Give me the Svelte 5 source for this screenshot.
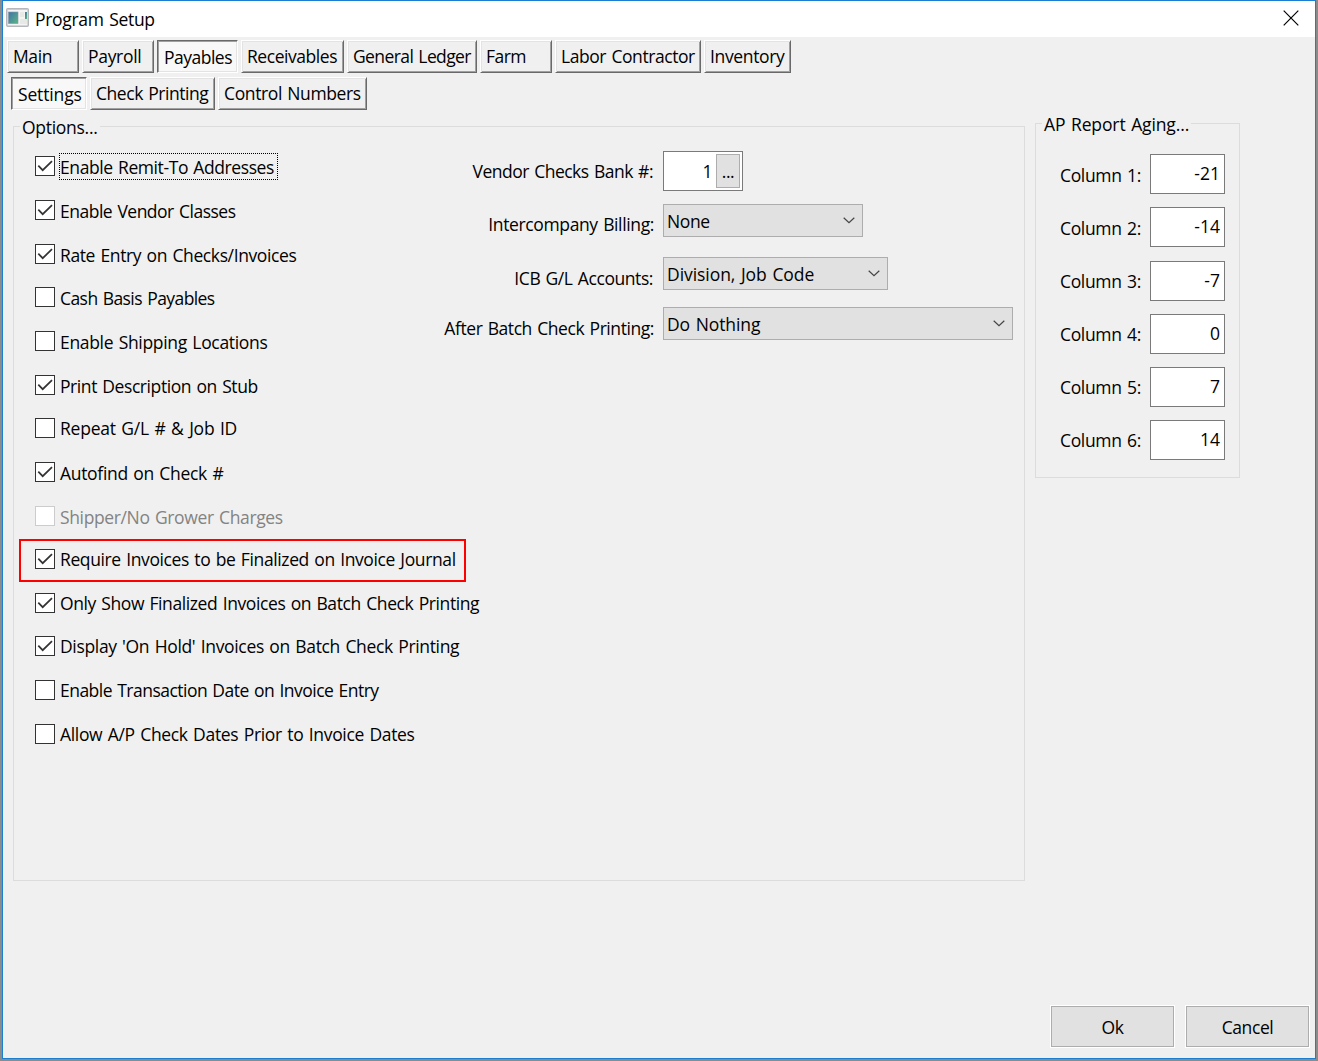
<script lang="ts">
    let activeTab = $state("Payables");
    let activeSubTab = $state("Settings");

    const tabs = [
        { name: "Main", width: 72, spacing: -0.4 },
        { name: "Payroll", width: 72, spacing: -0.3 },
        { name: "Payables", width: 81, spacing: -0.5 },
        { name: "Receivables", width: 103, spacing: -0.45 },
        { name: "General Ledger", width: 130, spacing: -0.6 },
        { name: "Farm", width: 72, spacing: -0.55 },
        { name: "Labor Contractor", width: 146, spacing: -0.43 },
        { name: "Inventory", width: 87, spacing: -0.35 },
    ];

    const subTabs = [
        { name: "Settings", width: 76, spacing: -0.15 },
        { name: "Check Printing", width: 125, spacing: -0.45 },
        { name: "Control Numbers", width: 149, spacing: -0.38 },
    ];

    let options = $state([
        { label: "Enable Remit-To Addresses", checked: true, spacing: -0.41, focused: true },
        { label: "Enable Vendor Classes", checked: true, spacing: -0.5 },
        { label: "Rate Entry on Checks/Invoices", checked: true, spacing: -0.38 },
        { label: "Cash Basis Payables", checked: false, spacing: -0.57 },
        { label: "Enable Shipping Locations", checked: false, spacing: -0.32 },
        { label: "Print Description on Stub", checked: true, spacing: -0.42 },
        { label: "Repeat G/L # & Job ID", checked: false, spacing: -0.22 },
        { label: "Autofind on Check #", checked: true, spacing: -0.31 },
        { label: "Shipper/No Grower Charges", checked: false, spacing: -0.37, disabled: true },
        { label: "Require Invoices to be Finalized on Invoice Journal", checked: true, spacing: -0.38, marked: true },
        { label: "Only Show Finalized Invoices on Batch Check Printing", checked: true, spacing: -0.4 },
        { label: "Display 'On Hold' Invoices on Batch Check Printing", checked: true, spacing: -0.34 },
        { label: "Enable Transaction Date on Invoice Entry", checked: false, spacing: -0.52 },
        { label: "Allow A/P Check Dates Prior to Invoice Dates", checked: false, spacing: -0.33 },
    ]);

    const selects = [
        { label: "Intercompany Billing:", value: "None", width: 200, spacing: -0.4 },
        { label: "ICB G/L Accounts:", value: "Division, Job Code", width: 225, spacing: -0.06 },
        { label: "After Batch Check Printing:", value: "Do Nothing", width: 350, spacing: -0.1 },
    ];

    const aging = ["-21", "-14", "-7", "0", "7", "14"];
</script>

<div class="desktop">
    <div class="window">
        <header class="titlebar">
            <svg class="app-icon" width="23" height="19" viewBox="0 0 23 19">
                <defs>
                    <linearGradient id="pane" x1="0" y1="0" x2="1" y2="1">
                        <stop offset="0" stop-color="#3f74a8" />
                        <stop offset="1" stop-color="#5cb585" />
                    </linearGradient>
                </defs>
                <rect x="0.75" y="0.75" width="21.5" height="17.5" rx="1" fill="#f4f4f4" stroke="#b4b8bd" stroke-width="1.5" />
                <path d="M1 1.5h21" stroke="#c9ced4" />
                <rect x="2.5" y="4" width="9.5" height="11.5" fill="url(#pane)" stroke="#8495a5" stroke-width="0.6" />
                <rect x="14" y="4" width="4" height="5" fill="#e6e9e4" />
                <rect x="14" y="11" width="7" height="5" fill="#e6e9e4" />
                <rect x="19" y="4" width="2" height="7" fill="url(#pane)" />
            </svg>
            <h1>Program Setup</h1>
            <button class="close" aria-label="Close">
                <svg width="16" height="16" viewBox="0 0 16 16">
                    <path d="M0.7 0.7l14.6 14.6M15.3 0.7L0.7 15.3" stroke="black" stroke-width="1.2" />
                </svg>
            </button>
        </header>

        <nav class="tabs">
            {#each tabs as tab (tab.name)}
                <button class="tab" class:active={tab.name === activeTab} style="width: {tab.width}px; letter-spacing: {tab.spacing}px" onclick={() => (activeTab = tab.name)}>{tab.name}</button>
            {/each}
        </nav>
        <nav class="tabs sub">
            {#each subTabs as tab (tab.name)}
                <button class="tab" class:active={tab.name === activeSubTab} style="width: {tab.width}px; letter-spacing: {tab.spacing}px" onclick={() => (activeSubTab = tab.name)}>{tab.name}</button>
            {/each}
        </nav>

        <main>
            <section class="group options">
                <h2>Options...</h2>
                <div class="checks">
                    {#each options as option (option.label)}
                        <label class="check" class:disabled={option.disabled} class:marked={option.marked}>
                            <input type="checkbox" bind:checked={option.checked} disabled={option.disabled} />
                            <span class="box">
                                {#if option.checked}
                                    <svg width="18" height="18" viewBox="0 0 18 18">
                                        <path d="M2.3 8.6l4.4 4.6L16 4.2" fill="none" stroke="#333" stroke-width="1.7" />
                                    </svg>
                                {/if}
                            </span>
                            <span class="text" class:focused={option.focused} style="letter-spacing: {option.spacing}px">{option.label}</span>
                        </label>
                    {/each}
                </div>
                <div class="fields">
                    <div class="field">
                        <span class="name">Vendor Checks Bank #:</span>
                        <div class="lookup">
                            <span>1</span>
                            <button>...</button>
                        </div>
                    </div>
                    {#each selects as select (select.label)}
                        <div class="field">
                            <span class="name">{select.label}</span>
                            <button class="select" style="width: {select.width}px; letter-spacing: {select.spacing}px">
                                {select.value}
                                <svg width="12" height="7" viewBox="0 0 12 7">
                                    <path d="M0.7 0.8L6 5.7l5.3-4.9" fill="none" stroke="#444" stroke-width="1.2" />
                                </svg>
                            </button>
                        </div>
                    {/each}
                </div>
            </section>

            <section class="group aging">
                <h2>AP Report Aging...</h2>
                <div class="columns">
                    {#each aging as days, i}
                        <div class="column">
                            <span>Column {i + 1}:</span>
                            <div class="number">{days}</div>
                        </div>
                    {/each}
                </div>
            </section>
        </main>

        <footer>
            <button class="action">Ok</button>
            <button class="action">Cancel</button>
        </footer>
    </div>
</div>

<style>
    :global(body) {
        margin: 0;
        overflow: hidden;
    }

    .desktop {
        box-sizing: border-box;
        width: 1318px;
        height: 1061px;
        padding: 0 2px 2px 2px;
        background-color: #8b8b8b;
    }

    .desktop *, .marked::before {
        box-sizing: border-box;
    }

    .window {
        display: flex;
        flex-direction: column;
        height: 1059px;
        border: 1px solid #1a7fd0;
        background-color: #f0f0f0;
        color: black;
        font-family: "Open Sans", "Noto Sans", sans-serif;
        font-size: 17.5px;
        line-height: 24px;
        letter-spacing: -0.4px;
        word-spacing: 1.2px;
        white-space: nowrap;
    }

    button {
        padding: 0;
        border: none;
        color: inherit;
        font: inherit;
        letter-spacing: inherit;
        word-spacing: inherit;
    }

    h1, h2 {
        margin: 0;
        font-size: inherit;
        font-weight: normal;
    }

    .titlebar {
        display: flex;
        height: 36px;
        padding: 7px 16px 0 3px;
        background-color: white;
    }

    .titlebar h1 {
        margin: -1px 0 0 6px;
        letter-spacing: -0.3px;
    }

    .close {
        width: 16px;
        height: 16px;
        margin: 2px 0 0 auto;
        background: none;
    }

    .close svg {
        display: block;
    }

    .tabs {
        display: flex;
        gap: 3px;
        height: 33px;
        margin: 3px 0 0 4px;
    }

    .tabs.sub {
        margin: 4px 0 0 8px;
    }

    .tab {
        padding: 0 0 1px 5px;
        border: 1px solid;
        border-color: white #696969 #696969 white;
        box-shadow: inset 1px 1px #e3e3e3, inset -1px -1px #a0a0a0;
        background-color: #f0f0f0;
        text-align: left;
    }

    .tab.active {
        padding: 1px 0 0 6px;
        border-color: #696969 white white #696969;
        box-shadow: inset 1px 1px #a0a0a0, inset -1px -1px #e3e3e3;
        background-color: #f8f8f8;
    }

    main {
        display: flex;
        gap: 10px;
        align-items: flex-start;
        padding: 13px 0 0 10px;
    }

    .group {
        border: 1px solid #dcdcdc;
    }

    .group h2 {
        width: fit-content;
        height: 24px;
        margin: -12px 0 0 6px;
        padding: 0 2px;
        background-color: #f0f0f0;
    }

    .options {
        display: grid;
        grid-template-columns: 410px 1fr;
        grid-template-rows: 12px 1fr;
        width: 1012px;
        height: 755px;
        margin-top: 3px;
    }

    .options h2 {
        grid-column: 1 / 3;
        letter-spacing: -0.28px;
    }

    .checks {
        display: grid;
        grid-template-rows: 44px 44px 43px 44px 44px 43px 44px 44px 43px 44px 43px 44px 44px 44px;
        align-content: start;
        padding: 17px 0 0 21px;
    }

    .check {
        position: relative;
        display: flex;
        align-items: flex-start;
        width: max-content;
    }

    .check input {
        position: absolute;
        opacity: 0;
    }

    .box {
        width: 20px;
        height: 20px;
        border: 1px solid #333;
        background-color: white;
    }

    .box svg {
        display: block;
    }

    .text {
        height: 27px;
        margin: -3px 0 0 4px;
        padding: 1px 4px 0 1px;
    }

    .check:nth-child(-n + 9):not(:nth-child(7)) .text {
        padding-top: 2px;
    }

    .text.focused {
        outline: 1px dotted black;
        outline-offset: -1px;
    }

    .disabled {
        color: #838383;
    }

    .disabled .box {
        border-color: #ccc;
    }

    .marked::before {
        content: "";
        position: absolute;
        left: -16px;
        top: -10px;
        width: 447px;
        height: 43px;
        border: 2px solid #f00;
    }

    .fields {
        display: grid;
        grid-template-rows: 53px 53px 50px 40px;
        align-content: start;
        padding-top: 12px;
    }

    .field {
        display: flex;
        align-items: flex-start;
    }

    .name {
        width: 230px;
        margin: 8px 9px 0 0;
        letter-spacing: -0.43px;
        text-align: right;
    }

    .field:nth-child(odd) .name {
        padding-right: 1px;
    }

    .field:nth-child(1) .name {
        letter-spacing: -0.5px;
    }

    .field:nth-child(2) .name {
        letter-spacing: -0.37px;
    }

    .field:nth-child(n + 3) .name {
        margin-top: 9px;
    }

    .lookup {
        display: flex;
        width: 80px;
        height: 40px;
        padding: 2px 2px 2px 0;
        border: 1px solid #7a7a7a;
        background-color: white;
    }

    .lookup span {
        flex: 1;
        padding: 5px 4px 0 0;
        text-align: right;
    }

    .lookup button {
        width: 24px;
        height: 34px;
        border: 1px solid #adadad;
        background-color: #e1e1e1;
    }

    .select {
        display: flex;
        align-items: center;
        justify-content: space-between;
        height: 33px;
        padding: 0 7px 0 3px;
        border: 1px solid #adadad;
        background-color: #e1e1e1;
    }

    .aging {
        width: 205px;
        height: 355px;
    }

    .aging h2 {
        letter-spacing: -0.12px;
    }

    .columns {
        display: grid;
        grid-template-rows: 53px 54px 53px 53px 53px 53px;
        padding-top: 18px;
    }

    .column {
        display: flex;
        gap: 9px;
        justify-content: flex-end;
        padding-right: 14px;
        letter-spacing: -0.33px;
    }

    .column span {
        padding-top: 9px;
    }

    .column:nth-child(n + 3) span {
        padding-top: 8px;
    }

    .number {
        width: 75px;
        height: 40px;
        padding: 6px 4px 0 0;
        border: 1px solid #7a7a7a;
        background-color: white;
        letter-spacing: 0;
        text-align: right;
    }

    footer {
        display: flex;
        gap: 12px;
        justify-content: flex-end;
        margin-top: auto;
        padding: 0 6px 11px 0;
    }

    .action {
        width: 123px;
        height: 41px;
        border: 1px solid #adadad;
        outline: 1px solid white;
        background-color: #e1e1e1;
    }
</style>
